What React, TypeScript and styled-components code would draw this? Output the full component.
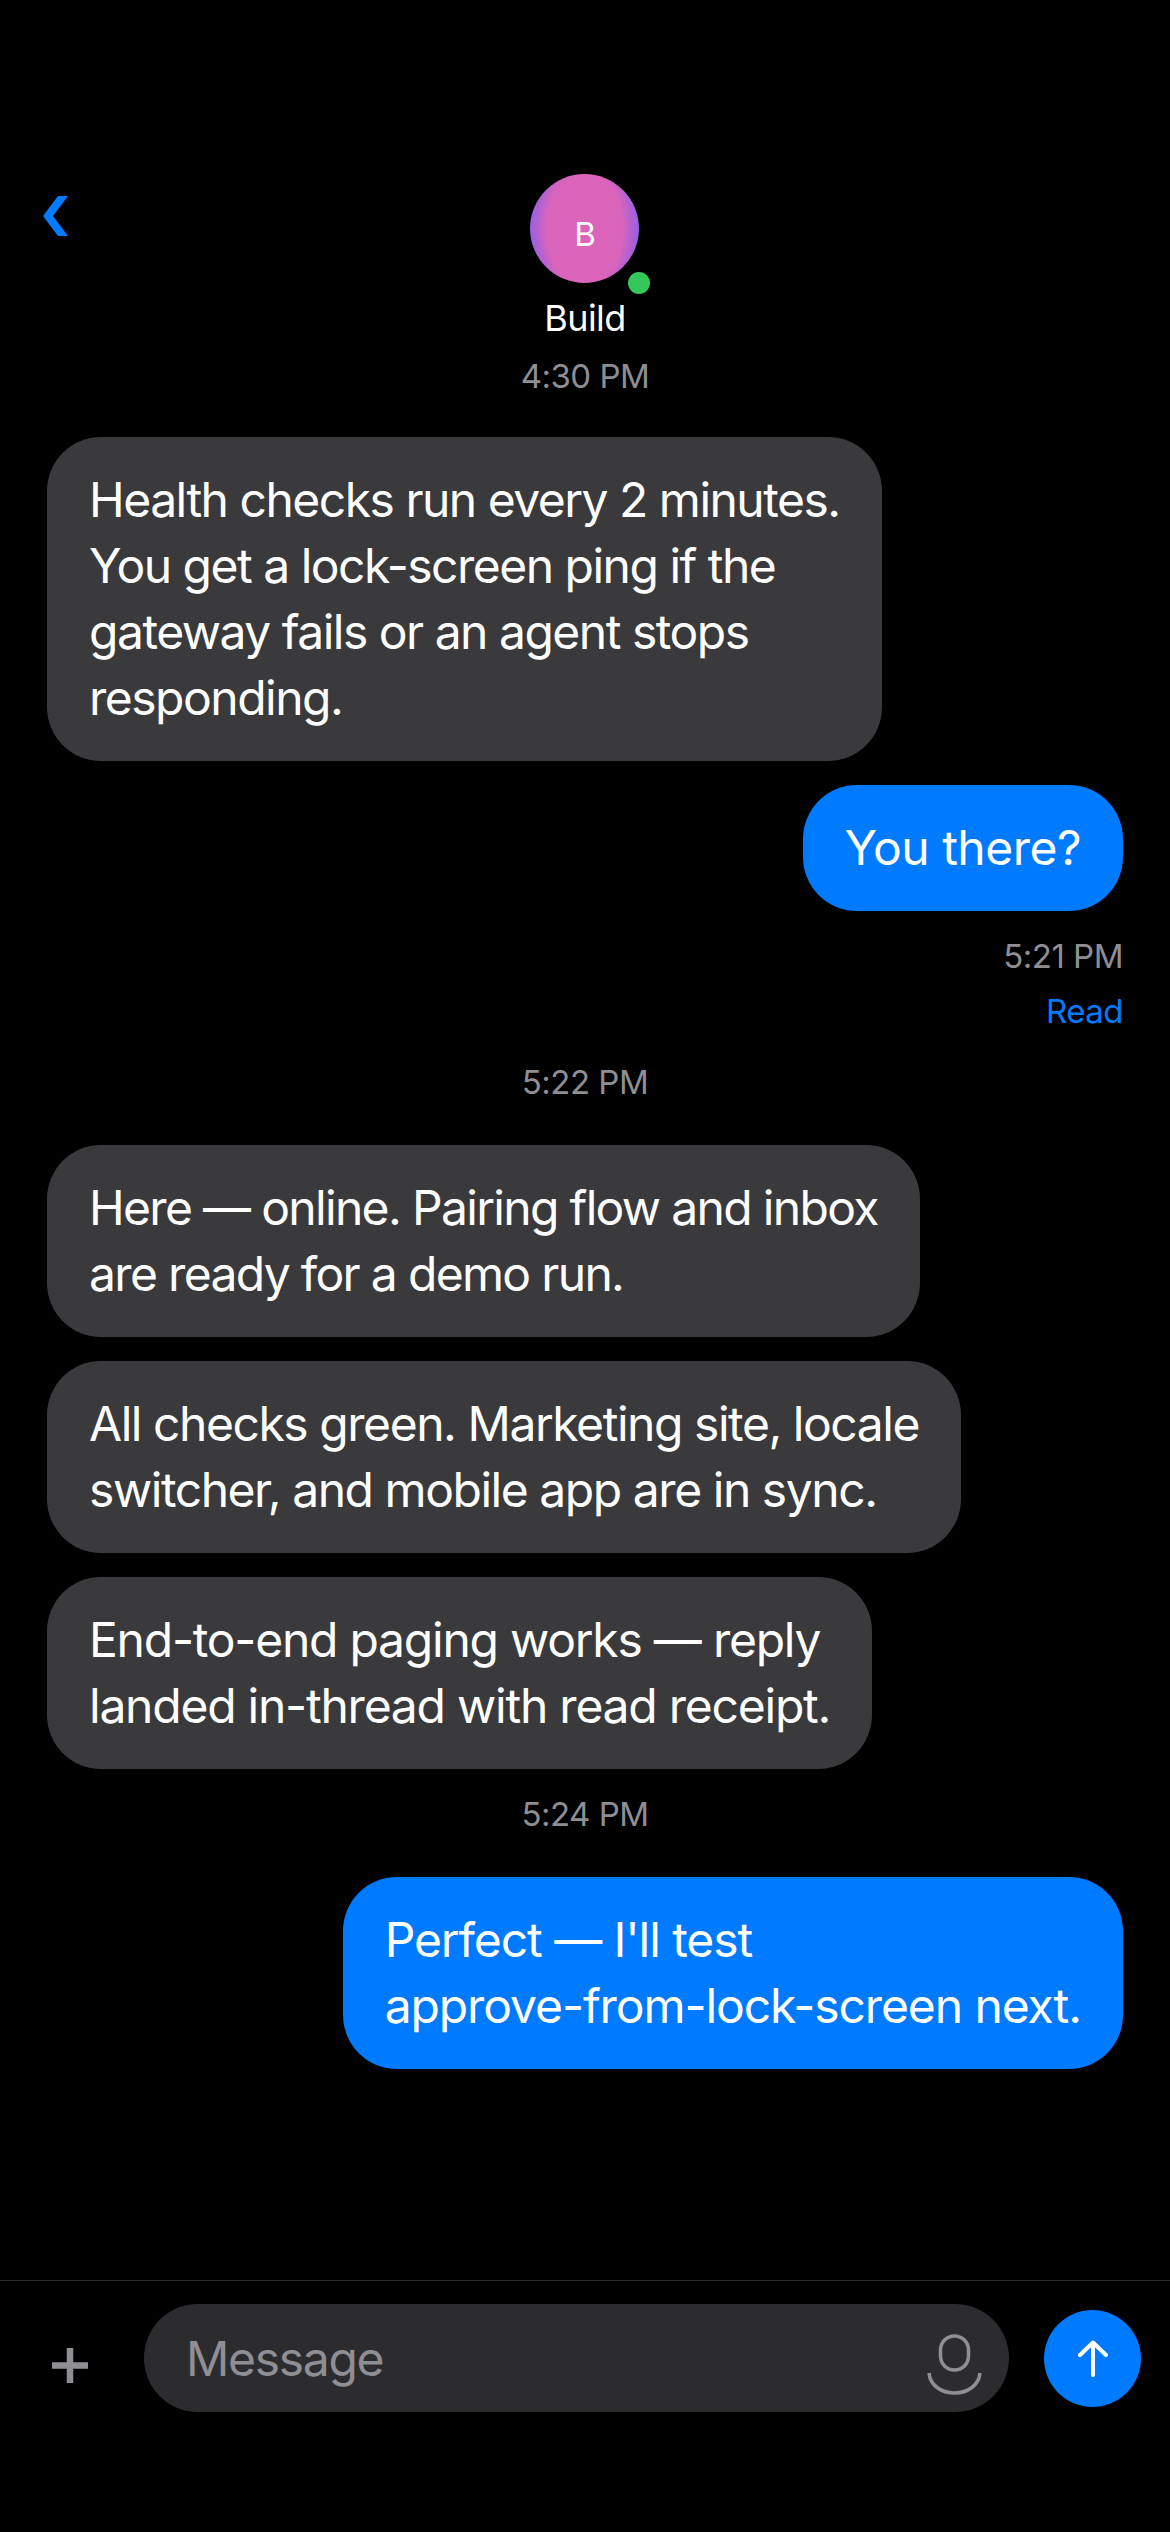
import React from 'react';
import styled, { createGlobalStyle } from 'styled-components';

const GlobalStyle = createGlobalStyle`
  html, body {
    margin: 0;
    padding: 0;
    background: #000;
  }
  * {
    box-sizing: border-box;
  }
`;

const Screen = styled.div`
  width: 1170px;
  height: 2532px;
  display: flex;
  flex-direction: column;
  background: #000;
  color: #fff;
  font-family: Inter, 'Liberation Sans', sans-serif;
  overflow: hidden;
`;

const Header = styled.header`
  display: grid;
  grid-template-columns: 1fr auto 1fr;
  padding-top: 174px;
`;

const BackButton = styled.button`
  justify-self: start;
  align-self: start;
  margin: 22px 0 0 43px;
  padding: 0;
  border: 0;
  background: none;
  color: #007aff;
  display: flex;
`;

const Contact = styled.div`
  display: flex;
  flex-direction: column;
  align-items: center;
`;

const Avatar = styled.div`
  position: relative;
  width: 109px;
  height: 109px;
  border-radius: 50%;
  display: flex;
  align-items: center;
  justify-content: center;
  background: radial-gradient(ellipse 55px 85px at center, #db64bb 68%, #9460e4 100%);
  font-size: 33px;
  line-height: 1;
  padding-top: 12px;
`;

const OnlineDot = styled.span`
  position: absolute;
  right: -11px;
  bottom: -11px;
  width: 22px;
  height: 22px;
  border-radius: 50%;
  background: #34c759;
`;

const ContactName = styled.div`
  margin-top: 11px;
  font-size: 36px;
  line-height: 48px;
  letter-spacing: -0.6px;
`;

const Stamp = styled.div<{ $top: number; $bottom: number }>`
  margin: ${({ $top, $bottom }) => `${$top}px 0 ${$bottom}px`};
  text-align: center;
  font-size: 33px;
  line-height: 40px;
  letter-spacing: -0.5px;
  color: #8e8e93;
`;

const Thread = styled.main`
  flex: 1;
  display: flex;
  flex-direction: column;
  padding: 41px 47px 0;
`;

const Bubble = styled.div<{ $mine?: boolean; $tracking: number }>`
  align-self: ${({ $mine }) => ($mine ? 'flex-end' : 'flex-start')};
  padding: 30px 42px;
  border-radius: 54px;
  background: ${({ $mine }) => ($mine ? '#007aff' : '#3a3a3c')};
  font-size: 48px;
  line-height: 66px;
  white-space: nowrap;
  letter-spacing: ${({ $tracking }) => $tracking}px;
  & + & {
    margin-top: 24px;
  }
`;

const ReceiptTime = styled.div`
  align-self: flex-end;
  margin-top: 25px;
  font-size: 33px;
  line-height: 40px;
  letter-spacing: -0.5px;
  color: #8e8e93;
`;

const ReceiptRead = styled(ReceiptTime)`
  margin-top: 15px;
  color: #007aff;
`;

const Composer = styled.footer`
  height: 252px;
  padding: 23px 29px 0 48px;
  border-top: 1px solid #2c2c2e;
  display: flex;
  align-items: flex-start;
`;

const PlusButton = styled.button`
  width: 44px;
  height: 44px;
  margin-top: 39px;
  padding: 0;
  border: 0;
  background: none;
  color: #8e8e93;
  display: flex;
`;

const InputPill = styled.div`
  margin-left: 52px;
  width: 865px;
  height: 108px;
  padding: 0 27px 0 42px;
  border-radius: 54px;
  background: #2c2c2e;
  display: flex;
  align-items: center;
  justify-content: space-between;
`;

const Placeholder = styled.span`
  font-size: 48px;
  color: #8e8e93;
  letter-spacing: -1.3px;
`;

const MicButton = styled.span`
  display: flex;
  color: #8e8e93;
  margin-top: 13px;
`;

const SendButton = styled.button`
  margin: 6px 0 0 35px;
  width: 97px;
  height: 97px;
  padding: 0;
  border: 0;
  border-radius: 50%;
  background: #007aff;
  color: #fff;
  display: flex;
  align-items: center;
  justify-content: center;
`;

const Lines: React.FC<{ lines: string[] }> = ({ lines }) => (
  <>
    {lines.map((line, i) => (
      <React.Fragment key={line}>
        {i > 0 && <br />}
        {line}
      </React.Fragment>
    ))}
  </>
);

export default function App() {
  return (
    <Screen>
      <GlobalStyle />
      <Header>
        <BackButton aria-label="Back">
          <svg width="25" height="40" viewBox="0 0 25 40" fill="currentColor">
            <polygon points="15,0 25,0 10,20 25,40 15,40 0,20" />
          </svg>
        </BackButton>
        <Contact>
          <Avatar>
            B
            <OnlineDot />
          </Avatar>
          <ContactName>Build</ContactName>
          <Stamp $top={14} $bottom={0}>4:30 PM</Stamp>
        </Contact>
      </Header>
      <Thread>
        <Bubble $tracking={-1.5}>
          <Lines
            lines={[
              'Health checks run every 2 minutes.',
              'You get a lock-screen ping if the',
              'gateway fails or an agent stops',
              'responding.',
            ]}
          />
        </Bubble>
        <Bubble $mine $tracking={-0.5}>You there?</Bubble>
        <ReceiptTime>5:21 PM</ReceiptTime>
        <ReceiptRead>Read</ReceiptRead>
        <Stamp $top={31} $bottom={43}>5:22 PM</Stamp>
        <Bubble $tracking={-1.67}>
          <Lines lines={['Here — online. Pairing flow and inbox', 'are ready for a demo run.']} />
        </Bubble>
        <Bubble $tracking={-1.45}>
          <Lines lines={['All checks green. Marketing site, locale', 'switcher, and mobile app are in sync.']} />
        </Bubble>
        <Bubble $tracking={-1.23}>
          <Lines lines={['End-to-end paging works — reply', 'landed in-thread with read receipt.']} />
        </Bubble>
        <Stamp $top={25} $bottom={43}>5:24 PM</Stamp>
        <Bubble $mine $tracking={-1.08}>
          <Lines lines={["Perfect — I'll test", 'approve-from-lock-screen next.']} />
        </Bubble>
      </Thread>
      <Composer>
        <PlusButton aria-label="Add">
          <svg width="44" height="44" viewBox="0 0 44 44" fill="none">
            <path d="M22 5 V40 M4 22.5 H40" stroke="currentColor" strokeWidth="6.5" />
          </svg>
        </PlusButton>
        <InputPill>
          <Placeholder>Message</Placeholder>
          <MicButton>
            <svg width="55" height="61" viewBox="0 0 55 61" fill="none" stroke="currentColor" strokeWidth="3.5">
              <rect x="13.5" y="2" width="28" height="34" rx="14" />
              <path d="M2 39 C3 51 14 59 27.5 59 C41 59 52 51 53 39" />
            </svg>
          </MicButton>
        </InputPill>
        <SendButton aria-label="Send">
          <svg width="30" height="37" viewBox="0 0 30 37" fill="none" stroke="currentColor" strokeWidth="4" strokeLinecap="round" strokeLinejoin="round">
            <path d="M15 35 V2.5 M2 15 L15 2.5 L28 15" />
          </svg>
        </SendButton>
      </Composer>
    </Screen>
  );
}
